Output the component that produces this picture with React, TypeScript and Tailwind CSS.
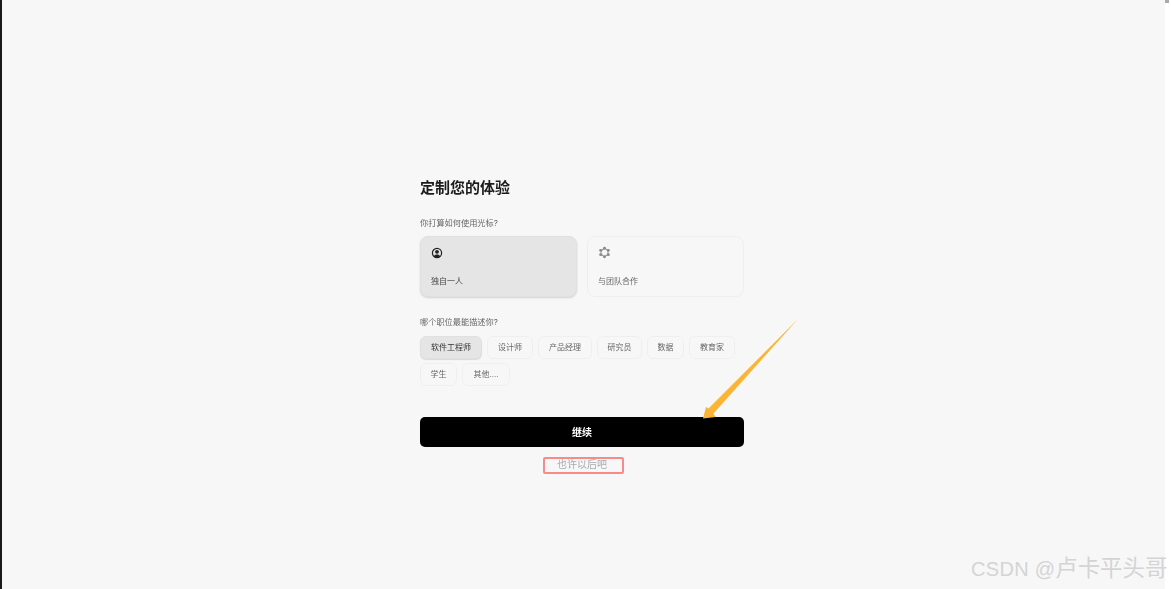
import clsx from 'clsx'

const FONT = "font-['Inter','Noto_Sans_CJK_SC',sans-serif]"

const roles = [
  { label: '软件工程师', w: 'w-[62px]', on: true },
  { label: '设计师', w: 'w-[46px]' },
  { label: '产品经理', w: 'w-[54px]' },
  { label: '研究员', w: 'w-[45px]' },
  { label: '数据', w: 'w-[37px]' },
  { label: '教育家', w: 'w-[46px]' },
  { label: '学生', w: 'w-[37px]' },
  { label: '其他....', w: 'w-[48px]' },
]

function PersonIcon() {
  return (
    <svg width="12" height="12" viewBox="0 0 12 12" fill="none">
      <circle cx="6" cy="6" r="4.6" stroke="#222" strokeWidth="1.2" />
      <circle cx="6" cy="4.8" r="1.9" fill="#222" />
      <path d="M2.8 9.4C3.4 7.9 4.6 7.400 6 7.400s2.600.5 3.200 2C8.400 10.200 7.200 10.600 6 10.600s-2.400-.4-3.200-1.200z" fill="#222" />
    </svg>
  )
}

function TeamIcon() {
  return (
    <svg width="13" height="13" viewBox="0 0 14 14" fill="none" stroke="#9a9a9a" strokeWidth="1.2">
      <circle cx="7" cy="7" r="3.8" />
      <circle cx="7" cy="2.300" r="1.600" fill="#8a8a8a" stroke="none" />
      <circle cx="7" cy="11.700" r="1.600" fill="#8a8a8a" stroke="none" />
      <circle cx="2.900" cy="4.700" r="1.600" fill="#8a8a8a" stroke="none" />
      <circle cx="11.100" cy="4.700" r="1.600" fill="#8a8a8a" stroke="none" />
      <circle cx="2.900" cy="9.300" r="1.600" fill="#8a8a8a" stroke="none" />
      <circle cx="11.100" cy="9.300" r="1.600" fill="#8a8a8a" stroke="none" />
    </svg>
  )
}

export default function App() {
  return (
    <div className={clsx(FONT, 'relative h-[589px] w-[1171px] overflow-hidden bg-white flex')}>
      <div className="w-[2px] bg-[#1a1a1a]" />
      <div className="w-[1163px] bg-[#f7f7f7] pl-[418px] pt-[178px]">
        <div className="w-[324px] blur-[0.5px]">
          <h1 className="text-[15px] leading-[20px] font-bold text-[#1c1c1c]">定制您的体验</h1>

          <p className="mt-[19px] text-[8.200px] leading-[12px] text-[#666]">你打算如何使用光标?</p>
          <div className="mt-[7px] flex gap-[10px]">
            <div className="h-[61px] flex-1 rounded-[8px] bg-[#e5e5e5] border border-[#e0e0e0] shadow-[0_1px_2px_rgba(0,0,0,0.15)] px-[10px] pt-[10px]">
              <PersonIcon />
              <p className="mt-[16px] text-[8px] leading-[12px] text-[#444]">独自一人</p>
            </div>
            <div className="h-[61px] flex-1 rounded-[8px] border border-[#efefef] px-[10px] pt-[9px]">
              <TeamIcon />
              <p className="mt-[16px] text-[8px] leading-[12px] text-[#666]">与团队合作</p>
            </div>
          </div>

          <p className="mt-[19px] text-[8.200px] leading-[12px] text-[#666]">哪个职位最能描述你?</p>
          <div className="mt-[8px] flex flex-wrap gap-x-[5px] gap-y-[4px]">
            {roles.map(r => (
              <div
                key={r.label}
                className={clsx(
                  'h-[23px] rounded-[6px] border flex items-center justify-center text-[8px] pb-[1px]',
                  r.w,
                  r.on
                    ? 'bg-[#e5e5e5] border-[#e0e0e0] text-[#333] shadow-[0_1px_1px_rgba(0,0,0,0.12)]'
                    : 'border-[#efefef] text-[#666]',
                )}
              >
                {r.label}
              </div>
            ))}
          </div>

          <button className="mt-[31px] h-[30px] w-full rounded-[5px] bg-black text-white text-[10px] font-bold">
            继续
          </button>
          <p className="mt-[10px] text-center text-[10px] leading-[14px] text-[#aaa]">也许以后吧</p>
        </div>
      </div>

      {/* annotations drawn over the page */}
      <div className="absolute left-[543px] top-[457px] h-[17px] w-[81px] rounded-[2px] border-2 border-[#f88a8a]" />
      <svg className="absolute left-[695px] top-[315px]" width="110" height="110" viewBox="0 0 110 110">
        <path d="M103 4 L18.500 98.500 L20.500 102 L8 103.500 L11 92 L13.500 93.500 Z" fill="#fbb433" />
      </svg>
      <span className="absolute left-[971px] top-[555px] font-['Liberation_Sans','Noto_Sans_CJK_SC',sans-serif] text-[20px] leading-[28px] tracking-[0.3px] text-[#d4d4d4] whitespace-nowrap">
        CSDN @<span className="text-[22.400px] tracking-normal">卢卡平头哥</span>
      </span>
      <div className="absolute left-[1165px] top-0 h-[3px] w-[4px] bg-[#aaa]" />
    </div>
  )
}
